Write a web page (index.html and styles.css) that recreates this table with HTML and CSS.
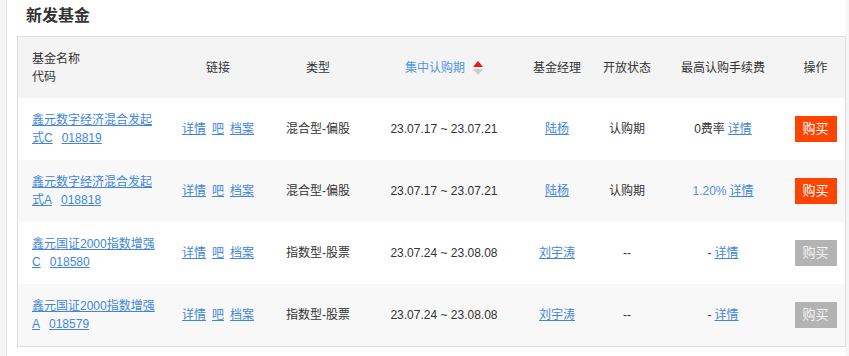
FILE: index.html
```html
<!DOCTYPE html>
<html lang="zh-CN">
<head>
<meta charset="utf-8">
<title>新发基金</title>
<link rel="stylesheet" href="styles.css">
</head>
<body>
<div class="panel">
  <h2 class="title">新发基金</h2>
  <div class="table">
    <div class="row head">
      <div class="cell name"><span>基金名称<br>代码</span></div>
      <div class="cell">链接</div>
      <div class="cell">类型</div>
      <div class="cell period">集中认购期
        <svg class="sort" width="10" height="14" viewBox="0 0 10 14"><polygon points="5,0 10,6 0,6" fill="#f01414"/><polygon points="0,8 10,8 5,14" fill="#cccccc"/></svg>
      </div>
      <div class="cell">基金经理</div>
      <div class="cell">开放状态</div>
      <div class="cell">最高认购手续费</div>
      <div class="cell">操作</div>
    </div>

    <div class="row">
      <div class="cell name"><div class="name-inner"><a href="#">鑫元数字经济混合发起式C</a><a class="code" href="#">018819</a></div></div>
      <div class="cell links"><a href="#">详情</a><a href="#">吧</a><a href="#">档案</a></div>
      <div class="cell">混合型-偏股</div>
      <div class="cell">23.07.17 ~ 23.07.21</div>
      <div class="cell"><a href="#">陆杨</a></div>
      <div class="cell">认购期</div>
      <div class="cell fee">0费率 <a href="#">详情</a></div>
      <div class="cell"><span class="buy">购买</span></div>
    </div>

    <div class="row">
      <div class="cell name"><div class="name-inner"><a href="#">鑫元数字经济混合发起式A</a><a class="code" href="#">018818</a></div></div>
      <div class="cell links"><a href="#">详情</a><a href="#">吧</a><a href="#">档案</a></div>
      <div class="cell">混合型-偏股</div>
      <div class="cell">23.07.17 ~ 23.07.21</div>
      <div class="cell"><a href="#">陆杨</a></div>
      <div class="cell">认购期</div>
      <div class="cell fee"><span class="rate">1.20%</span> <a href="#">详情</a></div>
      <div class="cell"><span class="buy">购买</span></div>
    </div>

    <div class="row">
      <div class="cell name"><div class="name-inner"><a href="#">鑫元国证2000指数增强C</a><a class="code" href="#">018580</a></div></div>
      <div class="cell links"><a href="#">详情</a><a href="#">吧</a><a href="#">档案</a></div>
      <div class="cell">指数型-股票</div>
      <div class="cell">23.07.24 ~ 23.08.08</div>
      <div class="cell"><a href="#">刘宇涛</a></div>
      <div class="cell">--</div>
      <div class="cell fee">- <a href="#">详情</a></div>
      <div class="cell"><span class="buy off">购买</span></div>
    </div>

    <div class="row">
      <div class="cell name"><div class="name-inner"><a href="#">鑫元国证2000指数增强A</a><a class="code" href="#">018579</a></div></div>
      <div class="cell links"><a href="#">详情</a><a href="#">吧</a><a href="#">档案</a></div>
      <div class="cell">指数型-股票</div>
      <div class="cell">23.07.24 ~ 23.08.08</div>
      <div class="cell"><a href="#">刘宇涛</a></div>
      <div class="cell">--</div>
      <div class="cell fee">- <a href="#">详情</a></div>
      <div class="cell"><span class="buy off">购买</span></div>
    </div>
  </div>
</div>
</body>
</html>
```

FILE: styles.css
```css
html, body {
  margin: 0;
  padding: 0;
}
body {
  background: #f5f5f5;
  font-family: "Liberation Sans", "Noto Sans CJK SC", sans-serif;
  font-size: 12px;
  color: #333;
}
a {
  color: #3f86dc;
  text-decoration: underline;
}
.panel {
  box-sizing: border-box;
  width: 840px;
  margin-left: 6px;
  min-height: 356px;
  border-left: 1px solid #e3e3e3;
  background: #fff;
  padding-top: 4px;
}
.title {
  margin: 0 0 8px 19px;
  font-size: 16px;
  font-weight: bold;
  line-height: 24px;
  color: #333;
}
.table {
  box-sizing: border-box;
  width: 829px;
  margin-left: 10px;
  border: 1px solid #ddd;
}
.row {
  display: grid;
  grid-template-columns: 150px 100px 100px 152px 74px 66px 126px 59px;
  height: 62px;
}
.row.head {
  height: 61px;
  background: #f4f4f4;
}
.row:nth-child(odd):not(.head) {
  background: #f8f8f8;
}
.cell {
  display: flex;
  align-items: center;
  justify-content: center;
  white-space: nowrap;
  line-height: 18px;
}
.cell.name {
  justify-content: flex-start;
  padding-left: 14px;
  white-space: normal;
}
.name-inner {
  width: 126px;
}
.code {
  margin-left: 9px;
}
.links a + a {
  margin-left: 6px;
}
.period {
  color: #4f94e6;
}
.sort {
  margin-left: 8px;
}
.fee a {
  margin-left: 3px;
}
.rate {
  color: #5a8fe0;
}
.buy {
  display: inline-block;
  width: 42px;
  height: 26px;
  line-height: 26px;
  text-align: center;
  background: #ff4400;
  color: #fff;
  font-size: 13px;
}
.buy.off {
  background: #b3b3b3;
  color: #f2f2f2;
}
```
